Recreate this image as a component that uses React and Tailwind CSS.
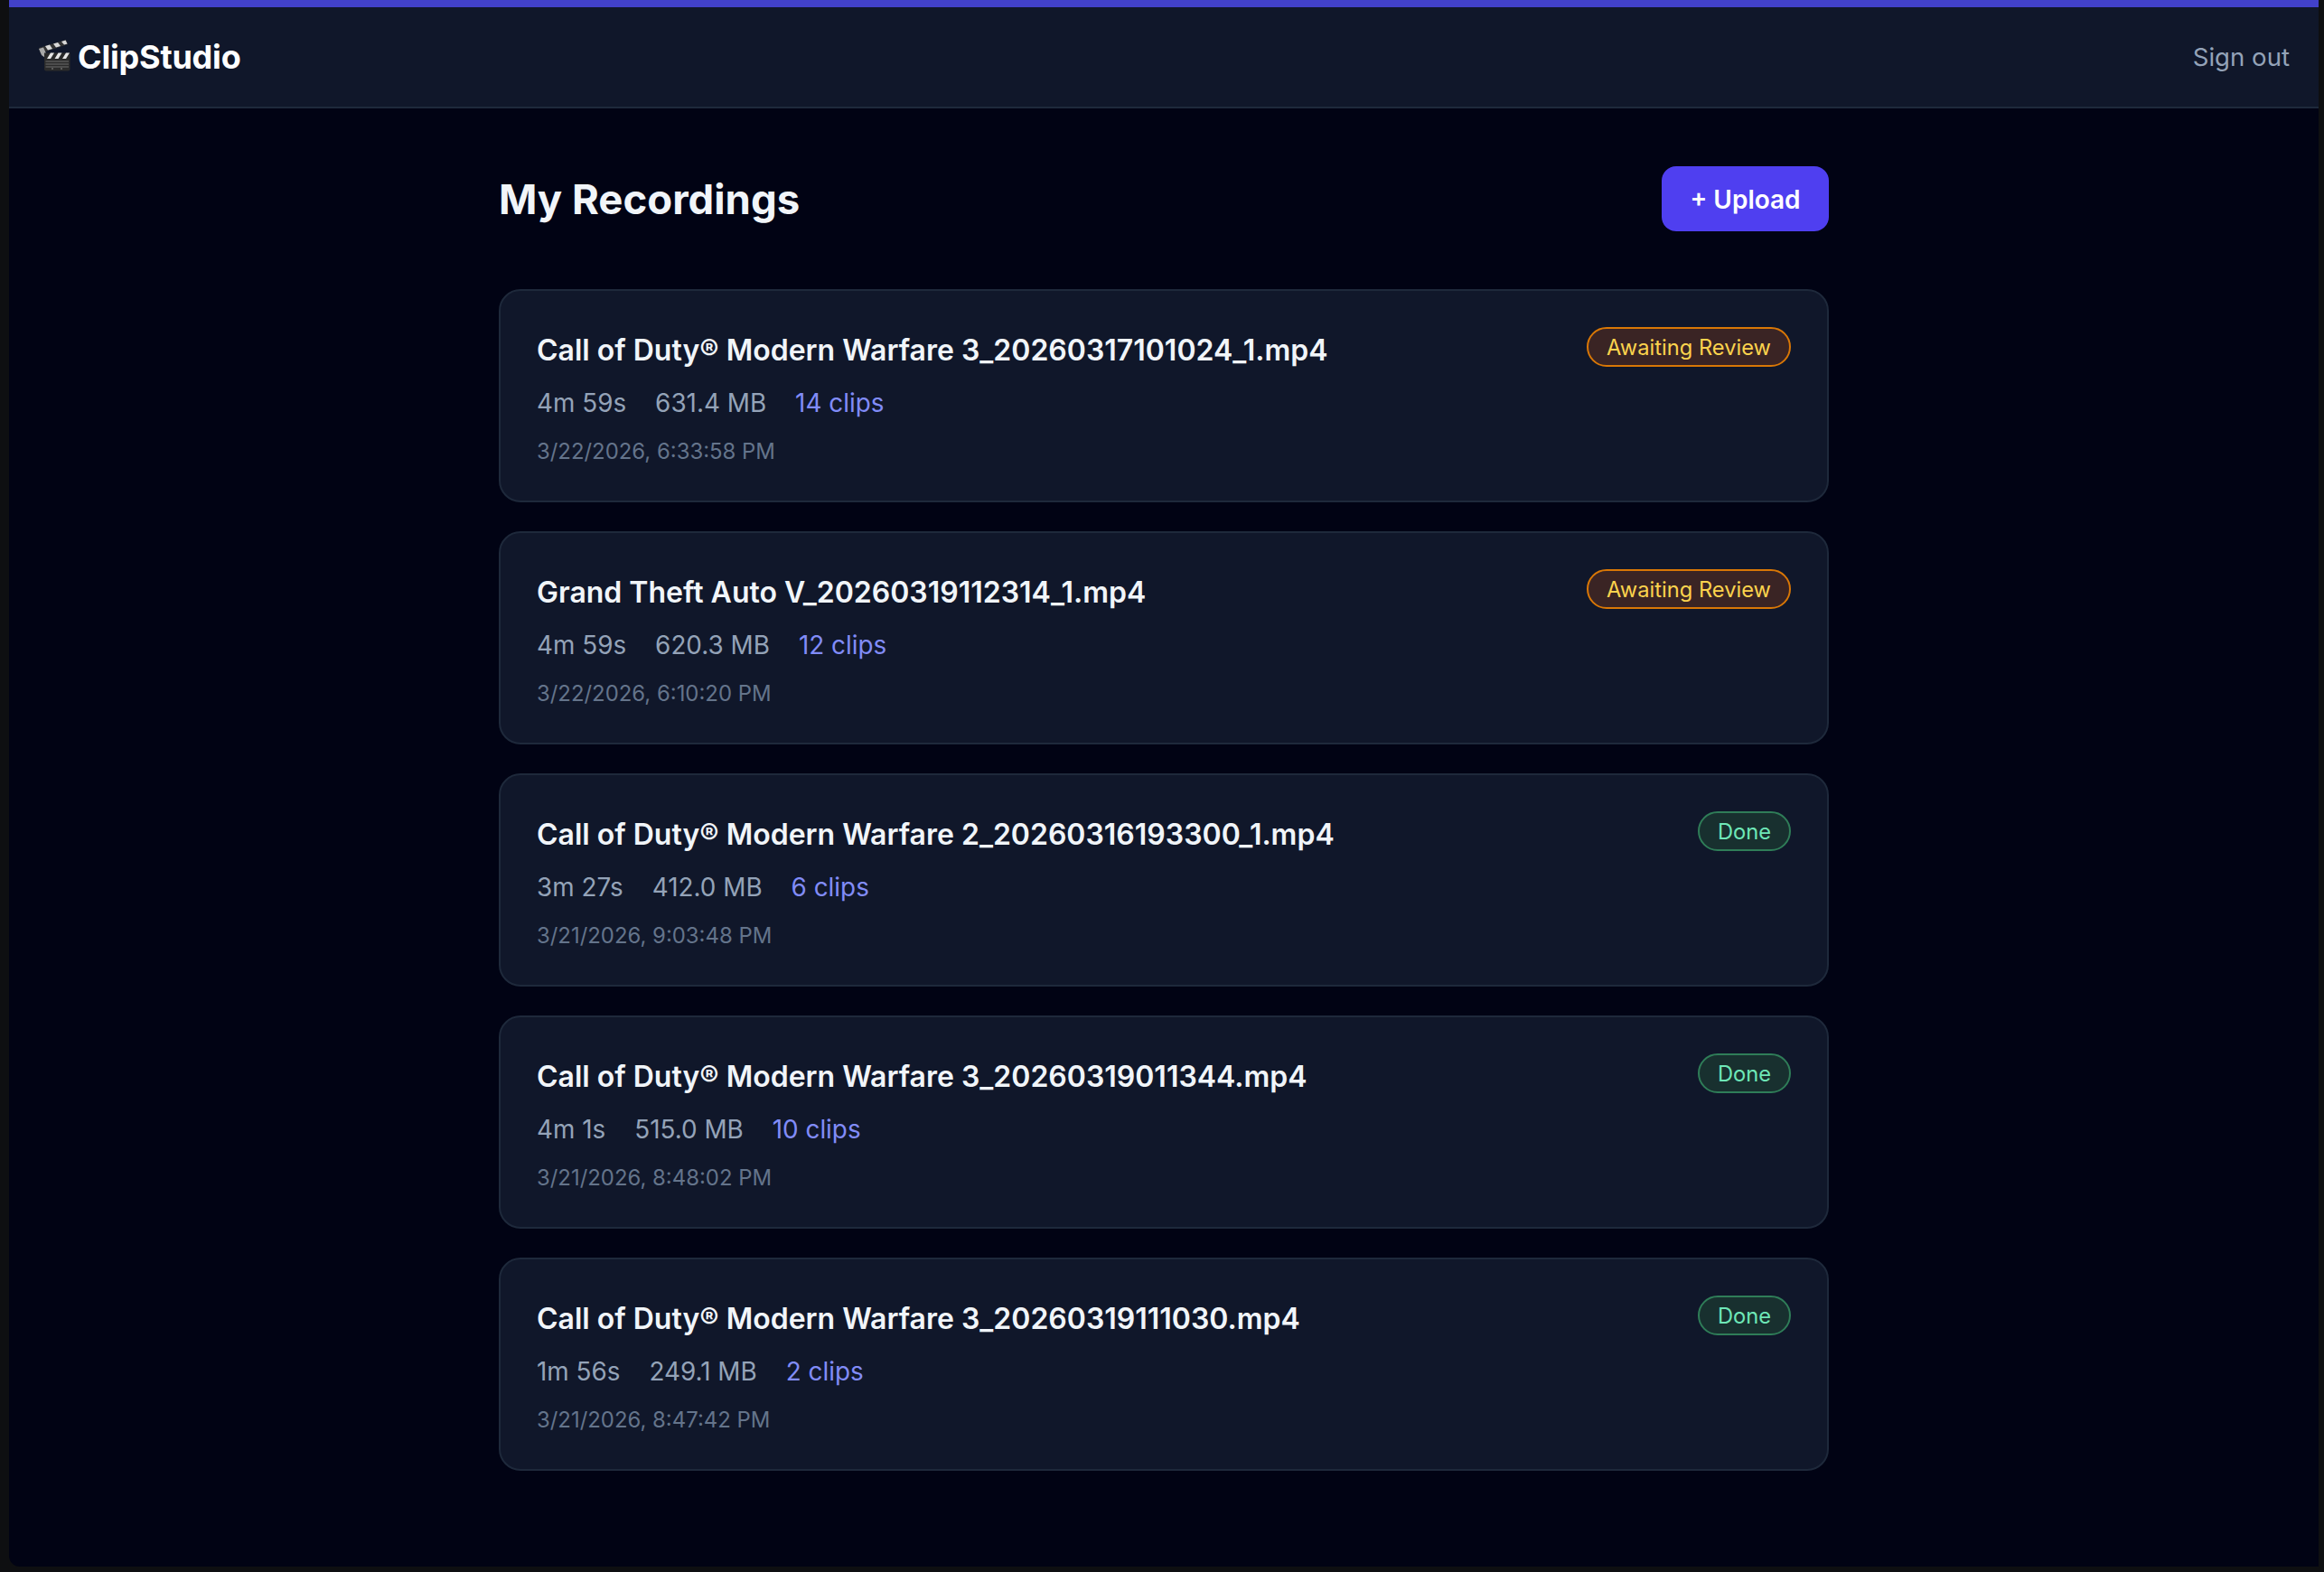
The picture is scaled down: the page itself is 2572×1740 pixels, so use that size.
import React from 'react'

const recordings = [
  { name: 'Call of Duty® Modern Warfare 3_20260317101024_1.mp4', duration: '4m 59s', size: '631.4 MB', clips: '14 clips', date: '3/22/2026, 6:33:58 PM', status: 'review' },
  { name: 'Grand Theft Auto V_20260319112314_1.mp4', duration: '4m 59s', size: '620.3 MB', clips: '12 clips', date: '3/22/2026, 6:10:20 PM', status: 'review' },
  { name: 'Call of Duty® Modern Warfare 2_20260316193300_1.mp4', duration: '3m 27s', size: '412.0 MB', clips: '6 clips', date: '3/21/2026, 9:03:48 PM', status: 'done' },
  { name: 'Call of Duty® Modern Warfare 3_20260319011344.mp4', duration: '4m 1s', size: '515.0 MB', clips: '10 clips', date: '3/21/2026, 8:48:02 PM', status: 'done' },
  { name: 'Call of Duty® Modern Warfare 3_20260319111030.mp4', duration: '1m 56s', size: '249.1 MB', clips: '2 clips', date: '3/21/2026, 8:47:42 PM', status: 'done' },
]

const Clapper = () => (
  <svg viewBox="0 0 36 36" className="w-[36px] h-[36px] shrink-0 -mt-[4px]">
    {/* Top arm */}
    <path d="M1 10 L31 1 L33 6 L3 16 Z" fill="#333333" />
    <path d="M8 8 L13 6.5 L16 11 L11 12.5 Z M17 5.5 L22 4 L25 8 L20 9.5 Z M26 3 L30.5 1.5 L32.5 5.5 L29 6.5 Z" fill="#d8d8d8" />
    {/* Hinge */}
    <path d="M1 11 L6 9.5 L9 16 L8 21 L4 18 Z" fill="#a8a8a8" />
    {/* Striped bar */}
    <rect x="7" y="15.5" width="28.5" height="6.5" fill="#2a2a2a" />
    <path d="M10 22 L14 15.5 L18 15.5 L14 22 Z M18.5 22 L22.5 15.5 L26.5 15.5 L22.5 22 Z M27 22 L31 15.5 L35 15.5 L31 22 Z" fill="#e6e6e6" />
    {/* Board */}
    <path d="M7 22 H35.5 V33.5 Q35.5 35.5 33.5 35.5 H9 Q7 35.5 7 33.5 Z" fill="#2b2b2b" />
    <path d="M8.5 25 H34 M8.5 28 H34 M8.5 31 H34" stroke="#6f6f6f" strokeWidth="1" />
    <path d="M16 32 V34 M26 32 V34" stroke="#8a8a8a" strokeWidth="1" />
  </svg>
)

const Badge = ({ status }) =>
  status === 'review' ? (
    <span className="shrink-0 h-[44px] px-[20px] pt-[2px] flex items-center rounded-full border-2 border-[#d97706] bg-[#3a2424] text-[#fcd34d] text-[23.7px] leading-none">
      Awaiting Review
    </span>
  ) : (
    <span className="shrink-0 h-[44px] px-[20px] pt-[2px] flex items-center rounded-full border-2 border-[#2f7d58] bg-[#18302f] text-[#6ee7b7] text-[23.7px] leading-none">
      Done
    </span>
  )

const RecordingCard = ({ rec }) => (
  <div className="h-[236px] flex items-start justify-between rounded-[24px] border-2 border-[#1e293b] bg-[#10172a] px-[40px] pt-[40px]">
    <div>
      <p className="text-[32px] leading-[52px] font-semibold text-[#f1f5f9]">{rec.name}</p>
      <div className="mt-[12px] flex gap-[32px] text-[27.85px] leading-[40px] text-[#94a3b8]">
        <span>{rec.duration}</span>
        <span>{rec.size}</span>
        <span className="text-[#818cf8]">{rec.clips}</span>
      </div>
      <p className="mt-[16px] text-[23.9px] leading-[36px] text-[#64748b]">{rec.date}</p>
    </div>
    <Badge status={rec.status} />
  </div>
)

export default function App() {
  return (
    <div className="min-h-[1740px] bg-[#0e0f11] pl-[10px] pr-[6px] pb-[6px] font-['Inter',sans-serif]">
      <div className="min-h-[1734px] flex flex-col rounded-bl-[12px] bg-[#010314]">
        <div className="h-[8px] bg-[#4241c9]"></div>

        {/* Header */}
        <header className="h-[112px] flex items-center justify-between border-b-2 border-[#1e293b] bg-[#10172a] px-[32px]">
          <div className="flex items-center gap-[8px]">
            <Clapper />
            <span className="text-[36px] font-bold text-white tracking-[-0.2px]">ClipStudio</span>
          </div>
          <span className="pt-[2px] text-[27.6px] text-[#94a3b8]">Sign out</span>
        </header>

        {/* Main */}
        <main className="w-[1472px] mx-auto pt-[64px]">
          <div className="flex items-center justify-between mb-[64px]">
            <h1 className="pt-[3px] text-[45.5px] font-bold text-[#f1f5f9]">My Recordings</h1>
            <button className="h-[72px] w-[185px] pt-[1px] rounded-[16px] bg-[#4f3ff0] text-[28px] font-semibold text-white">
              + Upload
            </button>
          </div>
          <div className="flex flex-col gap-[32px]">
            {recordings.map((rec) => (
              <RecordingCard key={rec.name} rec={rec} />
            ))}
          </div>
        </main>
      </div>
    </div>
  )
}
